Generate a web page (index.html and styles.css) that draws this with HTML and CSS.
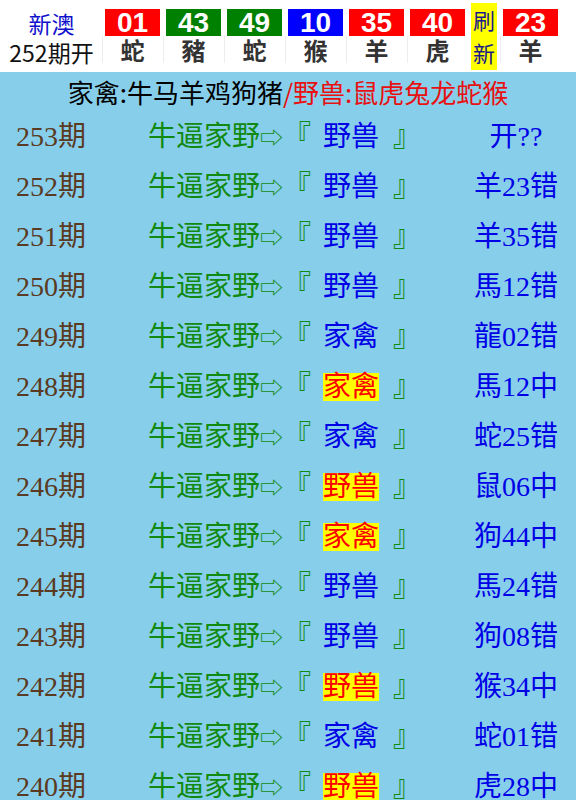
FILE: index.html
```html
<!DOCTYPE html>
<html>
  <head>
    <meta charset="utf-8">
    <title>新澳 家禽野兽</title>
    <link rel="stylesheet" href="styles.css">
  </head>
  <body>
    <div class="header">
      <div class="issue">
        <div class="brand">新澳</div>
        <div class="period">252期开</div>
      </div>
      <div class="balls">
        <div class="ball"><div class="num red">01</div><div class="zodiac">蛇</div></div>
        <div class="ball"><div class="num green">43</div><div class="zodiac">豬</div></div>
        <div class="ball"><div class="num green">49</div><div class="zodiac">蛇</div></div>
        <div class="ball"><div class="num blue">10</div><div class="zodiac">猴</div></div>
        <div class="ball"><div class="num red">35</div><div class="zodiac">羊</div></div>
        <div class="ball"><div class="num red">40</div><div class="zodiac">虎</div></div>
        <div class="refresh">刷<br>新</div>
        <div class="ball"><div class="num red">23</div><div class="zodiac">羊</div></div>
      </div>
    </div>

    <div class="board">
      <div class="legend">家禽:牛马羊鸡狗猪<span class="wild">/野兽:鼠虎兔龙蛇猴</span></div>
      <div id="rows"></div>
    </div>

    <script>
      // 期数, 推荐, 开奖, 是否中
      var data = [
        ["253", "野兽", "开??", false],
        ["252", "野兽", "羊23错", false],
        ["251", "野兽", "羊35错", false],
        ["250", "野兽", "馬12错", false],
        ["249", "家禽", "龍02错", false],
        ["248", "家禽", "馬12中", true],
        ["247", "家禽", "蛇25错", false],
        ["246", "野兽", "鼠06中", true],
        ["245", "家禽", "狗44中", true],
        ["244", "野兽", "馬24错", false],
        ["243", "野兽", "狗08错", false],
        ["242", "野兽", "猴34中", true],
        ["241", "家禽", "蛇01错", false],
        ["240", "野兽", "虎28中", true]
      ];

      var rows = document.getElementById("rows");
      data.forEach(function (d) {
        var row = document.createElement("div");
        row.className = "row";
        row.innerHTML =
          '<div class="qi">' + d[0] + '期</div>' +
          '<div class="tip"><span class="g">牛逼家野<span class="arrow">⇨</span>『</span>' +
          '<span class="pick' + (d[3] ? ' hit' : '') + '">' + d[1] + '</span>' +
          '<span class="g">』</span></div>' +
          '<div class="result">' + d[2] + '</div>';
        rows.appendChild(row);
      });
    </script>
  </body>
</html>
```

FILE: styles.css
```css
body {
  margin: 0;
  padding: 0;
  background-color: #fff;
  font-family: "Noto Sans CJK SC", sans-serif;
}

.header {
  display: flex;
  height: 72px;
  background-color: #fff;
}

.issue {
  width: 103px;
  padding-top: 9px;
  text-align: center;
  font-size: 23px;
  line-height: 29px;
}

.brand {
  color: #1010cc;
}

.period {
  color: #111;
}

.balls {
  display: flex;
  align-items: flex-start;
  gap: 6px;
  margin-left: 2px;
}

.ball {
  width: 55px;
  margin-top: 9px;
}

.num {
  height: 27px;
  line-height: 27px;
  text-align: center;
  color: #fff;
  font-family: "Liberation Sans", sans-serif;
  font-weight: bold;
  font-size: 28px;
}

.red {
  background-color: #f00;
}

.green {
  background-color: #008000;
}

.blue {
  background-color: #00f;
}

.zodiac {
  height: 27px;
  line-height: 27px;
  margin-left: -3px;
  padding-left: 2px;
  border-left: 1px solid #ededed;
  text-align: center;
  color: #333;
  font-weight: bold;
  font-size: 24px;
}

.refresh {
  width: 26px;
  height: 67px;
  margin-top: 3px;
  background-color: #ff0;
  color: #1a1a8a;
  text-align: center;
  font-size: 22px;
  line-height: 33px;
}

.board {
  background-color: #87ceeb;
  min-height: 728px;
}

.legend {
  height: 40px;
  line-height: 40px;
  text-align: center;
  font-size: 26px;
  color: #000;
}

.wild {
  color: #e81010;
}

.row {
  display: grid;
  grid-template-columns: 102px 354px 120px;
  height: 50px;
  line-height: 50px;
  font-family: "Liberation Serif", "Noto Sans CJK SC", "DejaVu Sans", serif;
  font-size: 28px;
}

.qi {
  text-align: center;
  color: #5a3a22;
}

.tip {
  padding-left: 46px;
  white-space: nowrap;
}

.g {
  color: #108a10;
}

.arrow {
  font-size: 23px;
}

.pick {
  display: inline-block;
  margin: 0 14px 0 12px;
  line-height: 28px;
  color: #0000e6;
}

.pick.hit {
  background-color: #ff0;
  color: #f00;
}

.result {
  text-align: center;
  color: #0000e6;
}
```
